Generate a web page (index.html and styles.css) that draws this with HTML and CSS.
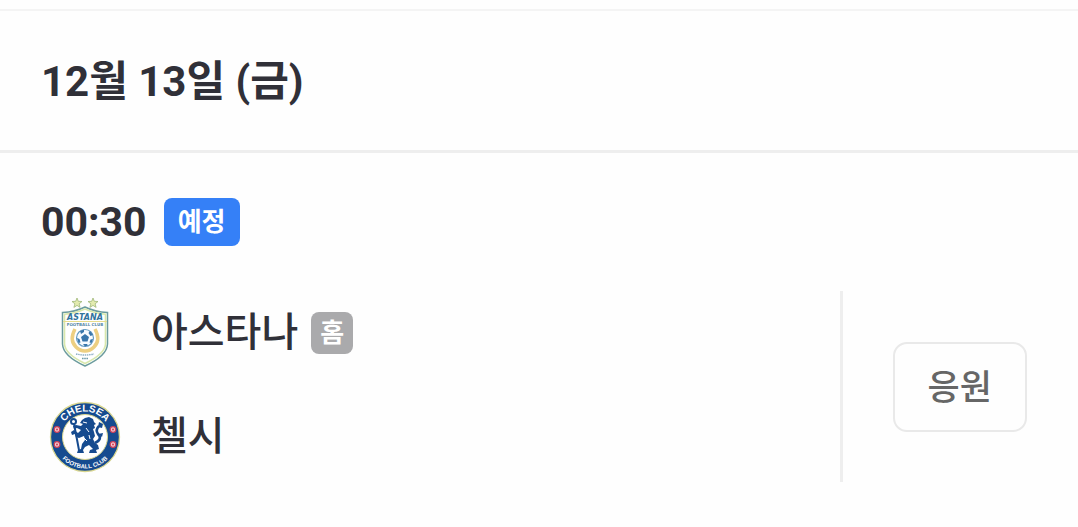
FILE: index.html
```html
<!DOCTYPE html>
<html lang="ko">
<head>
<meta charset="utf-8">
<meta name="viewport" content="width=device-width, initial-scale=1">
<title>경기 일정</title>
<link rel="stylesheet" href="styles.css">
</head>
<body>
<main class="schedule">
  <header class="day">
    <h2 class="day-title">12월 13일 (금)</h2>
  </header>
  <article class="match">
    <div class="match-head">
      <time class="match-time" datetime="00:30">00:30</time>
      <span class="badge badge-status">예정</span>
    </div>
    <div class="match-body">
      <ul class="teams">
        <li class="team">
          <svg class="crest" viewBox="0 0 72 72" aria-hidden="true">
            <g fill="#e3ebaf" stroke="#9fb879" stroke-width=".8">
              <path d="M28 1l1.300 3.300 3.700.2-2.900 2.300 1 3.600L28 8.400l-3.100 2 1-3.600L23 4.500l3.700-.2z"/>
              <path d="M44 1l1.300 3.300 3.700.2-2.900 2.300 1 3.600-3.100-2-3.100 2 1-3.600L39 4.500l3.700-.2z"/>
            </g>
            <path d="M36 10Q46 15 58.500 15.500V47Q58 59 36 69Q14 59 13.500 47V15.500Q26 15 36 10z" fill="#fff" stroke="#6b9b9d" stroke-width="1.500"/>
            <path d="M36 12Q46 16.500 56.500 17.200V47Q56 57 36 66.500Q16 57 15.500 47V17.200Q26 16.500 36 12z" fill="#fff" stroke="#d8e8ad" stroke-width="1.600"/>
            <path d="M14 24.500h44" stroke="#e8dd8d" stroke-width="1"/>
            <text class="astana-name" x="36" y="23" text-anchor="middle">ASTANA</text>
            <text class="astana-club" x="36" y="29" text-anchor="middle">FOOTBALL CLUB</text>
            <g fill="none" stroke="#edcf82" stroke-width="3.500">
              <path d="M26 32Q20 43 27 50Q31 54 36 54"/>
              <path d="M46 32Q52 43 45 50Q41 54 36 54"/>
            </g>
            <circle cx="36" cy="41" r="8.500" fill="#f7fbff" stroke="#659bc2" stroke-width="1.200"/>
            <path d="M36 37l4 3-1.500 4.500h-5L32 40zM31 34l4-1.500v2.500l-3 2zM41 34l3 4-2.500 1-2-3zM28 41l2.500 1 1 3.500-2 .5zM44 42l-1.500 4-2-.5 1-3zM34 47h4l1 1.500-3 1z" fill="#3976ab"/>
            <path d="M27 57Q36 59 45 57" fill="none" stroke="#8eaec4" stroke-width="1.400" stroke-dasharray="1.500 .7"/>
            <path d="M33 61.500h6" stroke="#6f9ba9" stroke-width="1.500" stroke-dasharray="1.200 .4"/>
          </svg>
          <span class="team-name">아스타나</span>
          <span class="badge badge-home">홈</span>
        </li>
        <li class="team">
          <svg class="crest" viewBox="0 0 72 72" aria-hidden="true">
            <defs>
              <path id="arc-top" d="M10.500 36A25.500 25.500 0 0 1 61.500 36"/>
              <path id="arc-bottom" d="M4.500 36A31.500 31.500 0 0 0 67.500 36"/>
            </defs>
            <circle cx="36" cy="36" r="34.500" fill="#164b8f" stroke="#d9d68e" stroke-width="1.300"/>
            <circle cx="36" cy="36" r="22.500" fill="#fff" stroke="#d9d68e" stroke-width="1"/>
            <text class="chelsea-name" text-anchor="middle"><textPath href="#arc-top" startOffset="50%">CHELSEA</textPath></text>
            <text class="chelsea-club" text-anchor="middle"><textPath href="#arc-bottom" startOffset="50%">FOOTBALL CLUB</textPath></text>
            <g fill="#f3c8d0" stroke="#cf4058" stroke-width="1.200">
              <circle cx="8" cy="28.500" r="2.800"/>
              <circle cx="8" cy="43.500" r="2.800"/>
              <circle cx="64" cy="28.500" r="2.800"/>
              <circle cx="64" cy="43.500" r="2.800"/>
            </g>
            <g fill="#cf4058">
              <circle cx="8" cy="28.500" r="1"/>
              <circle cx="8" cy="43.500" r="1"/>
              <circle cx="64" cy="28.500" r="1"/>
              <circle cx="64" cy="43.500" r="1"/>
            </g>
            <path d="M25 23L30 49" stroke="#164b8f" stroke-width="2" fill="none"/>
            <circle cx="24.500" cy="20.500" r="2.500" fill="#fff" stroke="#164b8f" stroke-width="2"/>
            <path d="M33 19l3-2 4-1 4 2 1 3 2 2-2 1 1 3-2 1 1 3 1 4-2 3 2 4 3 2 1 4-3 1 1 3h-8l1-3 3-1-4-4-4 2-2 3 1 3h-7l1-3 3-1 1-5 3-4-1-4-5 2-3-1-1-3-3 1-1-3 3-2 4 3 3-3-4-2-3 1-1-3 3-1 5 1 2-2-3-1z" fill="#164b8f"/>
            <path d="M46 42Q54 38 49 33Q46 29 50 25" fill="none" stroke="#164b8f" stroke-width="2.600"/>
            <path d="M49 26l1-5 4 2-1 4zM49 33l5-1-1 4z" fill="#164b8f"/>
            <path d="M34 21l4 1M37 27l3 4M35 37l3 3M40 34l1 4" stroke="#fff" stroke-width="1"/>
          </svg>
          <span class="team-name">첼시</span>
        </li>
      </ul>
      <div class="match-action">
        <button class="cheer" type="button">응원</button>
      </div>
    </div>
  </article>
</main>
</body>
</html>
```
FILE: styles.css
```css
* {
  box-sizing: border-box;
}

body {
  margin: 0;
  background: #fefefe;
  color: #303038;
  font-family: Roboto, "Noto Sans CJK KR", sans-serif;
}

.schedule {
  margin-top: 9px;
  border-top: 2px solid #f4f4f4;
}

.day {
  padding: 41px 41px 38px;
  border-bottom: 3px solid #eeeeee;
}

.day-title {
  margin: 0;
  font-size: 42px;
  line-height: 60px;
  font-weight: 700;
}

.match {
  padding: 45px 51px 44px 41px;
}

.match-head {
  display: flex;
  align-items: center;
  gap: 17px;
}

.match-time {
  font-size: 41px;
  line-height: 48px;
  font-weight: 700;
}

.badge {
  display: block;
  border-radius: 8px;
  color: #ffffff;
  font-size: 26px;
  font-weight: 700;
  text-align: center;
}

.badge-status {
  padding: 0 14px;
  background: #3580f7;
  line-height: 48px;
}

.badge-home {
  padding: 0 9px;
  background: #aaaaac;
  line-height: 42px;
}

.match-body {
  display: flex;
  margin-top: 45px;
}

.teams {
  flex: 1;
  display: flex;
  flex-direction: column;
  gap: 32px;
  margin: 0;
  padding: 6px 8px 9px;
  list-style: none;
}

.team {
  display: flex;
  align-items: center;
}

.crest {
  width: 72px;
  height: 72px;
}

.team-name {
  margin: 0 13px 0 30px;
  font-size: 40px;
  line-height: 60px;
  font-weight: 500;
}

.match-action {
  display: flex;
  align-items: center;
  padding-left: 50px;
  border-left: 3px solid #eeeeee;
}

.cheer {
  padding: 3px 33px 0;
  border: 2px solid #e9e9e9;
  border-radius: 14px;
  background: transparent;
  color: #666666;
  font-family: inherit;
  font-size: 35px;
  line-height: 83px;
  font-weight: 500;
}

.astana-name {
  fill: #31739d;
  font: italic bold 8px "DejaVu Sans", sans-serif;
}

.astana-club {
  fill: #5687a5;
  font: bold 4px "DejaVu Sans", sans-serif;
}

.chelsea-name {
  fill: #ffffff;
  font: bold 10px "Liberation Sans", sans-serif;
}

.chelsea-club {
  fill: #ffffff;
  font: bold 6px "Liberation Sans", sans-serif;
}
```
